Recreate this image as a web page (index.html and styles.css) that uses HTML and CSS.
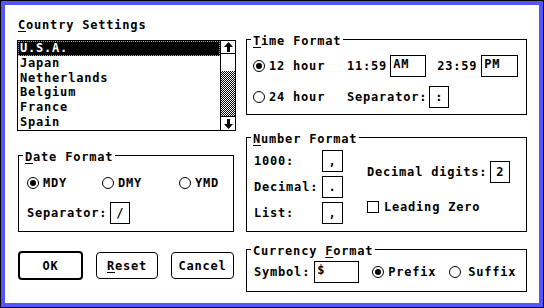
FILE: index.html
```html
<!DOCTYPE html>
<html lang="en">
<head>
  <meta charset="UTF-8" />
  <title>Country Settings</title>
  <link rel="stylesheet" href="styles.css">
</head>
<body>
  <div class="frame">
    <div class="dialog">

      <div class="col-left">
        <div class="title"><u>C</u>ountry Settings</div>

        <div class="listbox">
          <ul class="list">
            <li class="selected">U.S.A.</li>
            <li>Japan</li>
            <li>Netherlands</li>
            <li>Belgium</li>
            <li>France</li>
            <li>Spain</li>
          </ul>
          <div class="scrollbar">
            <div class="scroll-btn up">
              <svg width="9" height="10" viewBox="0 0 9 10"><path d="M4.5 0 9 5H6v5H3V5H0z"/></svg>
            </div>
            <div class="thumb"></div>
            <div class="track"></div>
            <div class="scroll-btn down">
              <svg width="9" height="10" viewBox="0 0 9 10"><path d="M4.5 10 9 5H6V0H3v5H0z"/></svg>
            </div>
          </div>
        </div>

        <div class="group date-group">
          <span class="legend"><u>D</u>ate Format</span>
          <div class="row">
            <label class="radio-item w75"><span class="radio on"></span>MDY</label>
            <label class="radio-item w77"><span class="radio"></span>DMY</label>
            <label class="radio-item"><span class="radio"></span>YMD</label>
          </div>
          <div class="row">
            <span>Separator:</span><span class="edit one date-sep">/</span>
          </div>
        </div>

        <div class="buttons">
          <button class="btn default">OK</button>
          <button class="btn reset"><u>R</u>eset</button>
          <button class="btn cancel">Cancel</button>
        </div>
      </div>

      <div class="col-right">
        <div class="group time-group">
          <span class="legend"><u>T</u>ime Format</span>
          <div class="row">
            <label class="radio-item hour"><span class="radio on"></span>12 hour</label>
            <span>11:59</span><span class="edit am">AM</span>
            <span class="t2">23:59</span><span class="edit pm">PM</span>
          </div>
          <div class="row">
            <label class="radio-item hour"><span class="radio"></span>24 hour</label>
            <span>Separator:</span><span class="edit one time-sep">:</span>
          </div>
        </div>

        <div class="group number-group">
          <span class="legend"><u>N</u>umber Format</span>
          <div class="num-left">
            <div class="row"><span class="num-label">1000:</span><span class="edit one num-box">,</span></div>
            <div class="row"><span class="num-label">Decimal:</span><span class="edit one num-box">.</span></div>
            <div class="row"><span class="num-label">List:</span><span class="edit one num-box">,</span></div>
          </div>
          <div class="num-right">
            <div class="row"><span>Decimal digits:</span><span class="edit one digits">2</span></div>
            <div class="row"><span class="check"></span><span>Leading Zero</span></div>
          </div>
        </div>

        <div class="group currency-group">
          <span class="legend">Currency <u>F</u>ormat</span>
          <div class="row">
            <span>Symbol:</span><span class="edit symbol">$</span>
            <label class="radio-item prefix"><span class="radio on"></span>Prefix</label>
            <label class="radio-item suffix"><span class="radio"></span>Suffix</label>
          </div>
        </div>
      </div>

    </div>
  </div>
</body>
</html>
```

FILE: styles.css
```css
:root {
  --frame-blue: #5555ff;
  --ink: #000;
  --paper: #fff;
}
* {
  box-sizing: border-box;
}
html, body {
  margin: 0;
}
body {
  width: 544px;
  height: 308px;
  font: bold 12px/14px "DejaVu Sans Mono", monospace;
  letter-spacing: 0.8px;
  color: var(--ink);
  background: var(--paper);
}
u {
  text-underline-offset: 2px;
}

/* window frame */
.frame {
  width: 544px;
  height: 308px;
  border: 1px solid var(--ink);
  background: var(--frame-blue);
  padding: 4px;
}
.dialog {
  height: 100%;
  background: var(--paper);
  display: flex;
  gap: 10px;
  padding: 13px 0 0 12px;
}
.col-left {
  width: 219px;
  display: flex;
  flex-direction: column;
}
.col-right {
  width: 281px;
  display: flex;
  flex-direction: column;
}

.title {
  height: 14px;
  padding-left: 1px;
}

/* list box */
.listbox {
  margin-top: 8px;
  height: 91px;
  border: 1px solid var(--ink);
  display: flex;
}
.list {
  flex: 1;
  margin: 0;
  padding: 0;
  list-style: none;
  overflow: hidden;
}
.list li {
  height: 14.8px;
  line-height: 14.8px;
  padding-left: 2px;
}
.list li.selected {
  background: var(--ink);
  color: var(--paper);
  outline: 1px dotted #aaa;
  outline-offset: -1px;
}
.scrollbar {
  width: 15px;
  border-left: 1px solid var(--ink);
  display: flex;
  flex-direction: column;
}
.scroll-btn {
  height: 13px;
  display: flex;
  align-items: center;
  justify-content: center;
}
.scroll-btn.up {
  border-bottom: 1px solid var(--ink);
}
.scroll-btn.down {
  height: 14px;
  border-top: 1px solid var(--ink);
}
.thumb {
  height: 17px;
}
.track {
  flex: 1;
  background: repeating-conic-gradient(var(--ink) 0 25%, var(--paper) 0 50%) 0 0 / 2px 2px;
}

/* group boxes */
.group {
  position: relative;
  border: 1px solid var(--ink);
}
.legend {
  position: absolute;
  top: -6px;
  left: 4px;
  padding: 0 2px 0 2px;
  background: var(--paper);
  white-space: nowrap;
}
.row {
  display: flex;
  align-items: center;
  height: 22px;
  white-space: nowrap;
}

/* controls */
.radio-item {
  display: flex;
  align-items: center;
}
.radio {
  width: 12px;
  height: 12px;
  border: 1px solid var(--ink);
  border-radius: 50%;
  margin-right: 4px;
  display: flex;
  align-items: center;
  justify-content: center;
  flex: none;
}
.radio.on::after {
  content: "";
  width: 6px;
  height: 6px;
  border-radius: 50%;
  background: var(--ink);
}
.check {
  width: 12px;
  height: 12px;
  border: 1px solid var(--ink);
  margin-right: 5px;
}
.edit {
  height: 22px;
  border: 1px solid var(--ink);
  padding: 1px 2px 0;
  display: flex;
  align-items: flex-start;
}
.edit.one {
  justify-content: center;
  padding: 3px 0 0;
}

/* date group */
.date-group {
  margin-top: 24px;
  margin-left: 1px;
  width: 216px;
  height: 77px;
  padding: 16px 0 0 8px;
  display: flex;
  flex-direction: column;
  gap: 8px;
}
.w75 { width: 75px; }
.w77 { width: 77px; }
.date-sep {
  width: 20px;
  margin-left: 3px;
}

/* buttons */
.buttons {
  margin-top: 19px;
  margin-left: 1px;
  display: flex;
  align-items: center;
  gap: 13px;
}
.btn {
  font: inherit;
  letter-spacing: inherit;
  color: var(--ink);
  background: var(--paper);
  border: 1px solid var(--ink);
  border-radius: 4px;
  padding: 0;
  height: 27px;
}
.btn.default {
  width: 65px;
  height: 29px;
  border-width: 2px;
}
.btn.reset { width: 62px; }
.btn.cancel { width: 63px; }

/* time group */
.time-group {
  margin-top: 21px;
  height: 76px;
  padding: 15px 0 0 6px;
  display: flex;
  flex-direction: column;
  gap: 9px;
}
.hour { width: 94px; }
.am {
  width: 36px;
  margin-left: 3px;
}
.t2 { margin-left: 11px; }
.pm {
  width: 37px;
  margin-left: 4px;
}
.time-sep {
  width: 20px;
  margin-left: 2px;
}

/* number group */
.number-group {
  margin-top: 22px;
  height: 95px;
  padding-left: 7px;
  display: flex;
}
.num-left {
  width: 89px;
  padding-top: 12px;
  display: flex;
  flex-direction: column;
  gap: 4px;
}
.num-label { width: 68px; }
.num-box { width: 21px; }
.num-right {
  margin-left: 24px;
  padding-top: 23px;
  display: flex;
  flex-direction: column;
  gap: 13px;
}
.digits {
  width: 20px;
  margin-left: 3px;
}

/* currency group */
.currency-group {
  margin-top: 17px;
  height: 43px;
  padding: 11px 0 0 7px;
}
.symbol {
  width: 45px;
  margin-left: 4px;
}
.prefix {
  width: 77px;
  margin-left: 13px;
}
.suffix .radio { margin-right: 7px; }
```
